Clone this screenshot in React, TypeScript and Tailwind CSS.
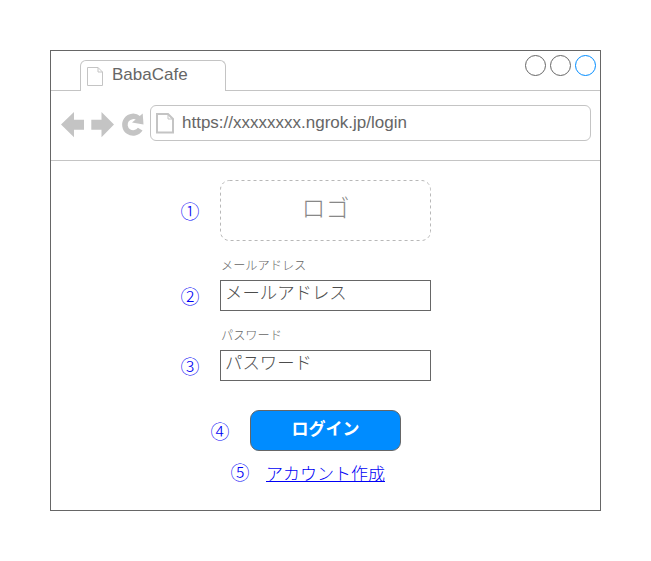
import React from "react";

const jp = "font-['Noto_Sans_CJK_JP',sans-serif]";

function Marker({ children, className = "" }: { children: string; className?: string }) {
  return (
    <span
      className={`font-['Noto_Sans_CJK_JP',sans-serif] block w-5 shrink-0 text-center text-[19px] font-light leading-[19px] text-[#0000f5] ${className}`}
    >
      {children}
    </span>
  );
}

function TitleBar() {
  return (
    <div className="flex h-10 items-end">
      <div className="h-10 w-[29px] border-b border-[#c4c4c4]" />
      <div className="flex h-[31px] w-[146px] rounded-t-[6px] border border-b-0 border-[#c4c4c4] pl-[6px] pt-[6px]">
        <svg width="16" height="19" viewBox="0 0 16 19" fill="none" stroke="#c4c4c4">
          <path d="M.5.5h10.500l4.500 4.500v13.500H.5zM11 .5v4.500h4.500" />
        </svg>
        <span className="ml-[9px] -mt-px text-[17px] leading-[18px]">BabaCafe</span>
      </div>
      <div className="flex h-10 flex-1 justify-end gap-1 border-b border-[#c4c4c4] pr-1 pt-1">
        <div className="size-[21px] rounded-full border border-[#666]" />
        <div className="size-[21px] rounded-full border border-[#666]" />
        <div className="size-[21px] rounded-full border border-[#008cff]" />
      </div>
    </div>
  );
}

function Toolbar() {
  return (
    <div className="flex h-[70px] border-b border-[#c4c4c4] pl-[10px] pt-[14px]">
      <svg className="mt-[6px] shrink-0" width="84" height="28" viewBox="61 111 84 28">
        <path fill="#c4c4c4" d="M61 124.500 74 112v7.700h10v10H74v7.600z" />
        <path fill="#c4c4c4" d="M114 124.500 101.500 112v7.700H91.300v10h10.200v7.600z" />
        <path
          d="M138.500 118.300a8.300 8.300 0 1 0 1.700 10.800"
          fill="none"
          stroke="#c4c4c4"
          strokeWidth="5.500"
        />
        <path fill="#c4c4c4" d="M142.700 113.500l.8 11-11.500-2z" />
      </svg>
      <div className="ml-[5px] flex h-9 w-[441px] rounded-[6px] border border-[#c4c4c4] pl-[5px] pt-[7px]">
        <svg width="18" height="21" viewBox="0 0 18 21" fill="none" stroke="#c4c4c4">
          <path strokeWidth="2" d="M1 1h11l5 5v13.500H1z" />
          <path d="M12 1v5h5" />
        </svg>
        <span className="ml-2 mt-px text-[17px] leading-[18px]">https://xxxxxxxx.ngrok.jp/login</span>
      </div>
    </div>
  );
}

function Field({ label, mark }: { label: string; mark: string }) {
  return (
    <div className="h-[70px]">
      <div className={`${jp} ml-[170px] h-[23px] text-[12.200px] font-light leading-[16px] text-[#666]`}>
        {label}
      </div>
      <div className="flex">
        <Marker className="ml-[129px] mt-[6px]">{mark}</Marker>
        <div
          className={`${jp} ml-5 h-[31px] w-[211px] border border-[#666] pl-1 text-[17.400px] font-light leading-[22px] text-[#4c4c4c]`}
        >
          {label}
        </div>
      </div>
    </div>
  );
}

export default function App() {
  return (
    <div className="h-[561px] w-[651px] bg-white p-[50px] font-['Liberation_Sans',Arial,sans-serif] text-[#666]">
      <div className="h-[461px] w-[551px] border border-[#666]">
        <TitleBar />
        <Toolbar />
        <div className="flex pt-[19px]">
          <Marker className="ml-[129px] mt-[21px]">①</Marker>
          <div className={`${jp} relative ml-5 h-[61px] w-[211px] text-center text-[24px] font-light leading-[54px] text-[#888]`}>
            <svg className="absolute inset-0" width="211" height="61" fill="none" stroke="#b8b8b8">
              <rect x=".5" y=".5" width="210" height="60" rx="9" strokeDasharray="3 3" />
            </svg>
            ロゴ
          </div>
        </div>
        <div className="pt-4">
          <Field label="メールアドレス" mark="②" />
          <Field label="パスワード" mark="③" />
        </div>
        <div className="flex pt-[13px]">
          <Marker className="ml-[159px] mt-[11px]">④</Marker>
          <button
            className={`${jp} ml-5 h-[41px] w-[151px] rounded-[9px] border border-[#666] bg-[#008cff] pb-[5px] text-[17px] font-bold leading-[34px] text-white`}
          >
            ログイン
          </button>
        </div>
        <div className="flex pt-[11px]">
          <Marker className="ml-[179px]">⑤</Marker>
          <a className={`${jp} ml-4 -mt-px text-[17px] font-light leading-6 text-[#0000f5] underline`}>
            アカウント作成
          </a>
        </div>
      </div>
    </div>
  );
}
